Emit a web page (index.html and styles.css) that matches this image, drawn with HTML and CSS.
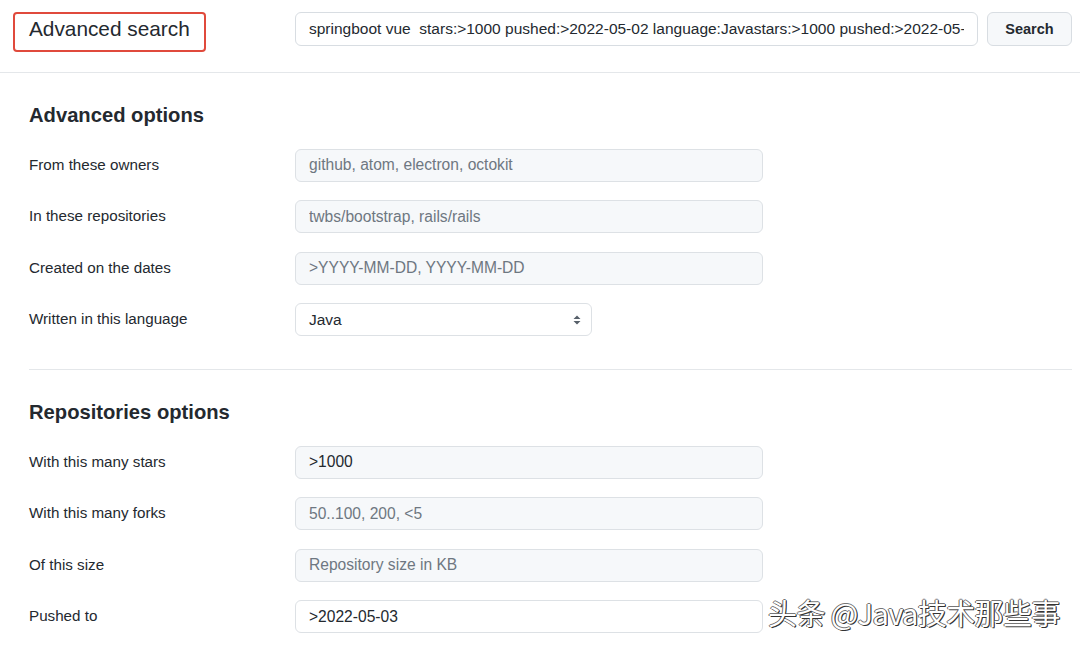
FILE: index.html
```html
<!DOCTYPE html>
<html lang="en">
<head>
<meta charset="utf-8">
<title>Advanced search</title>
<link rel="stylesheet" href="styles.css">
</head>
<body>
<div class="page">
  <header class="topbar">
    <div class="title-box"><h1 class="title">Advanced search</h1></div>
    <form class="search-form">
      <input class="search-input" type="text" value="springboot vue  stars:&gt;1000 pushed:&gt;2022-05-02 language:Javastars:&gt;1000 pushed:&gt;2022-05-03">
      <button class="search-btn" type="button">Search</button>
    </form>
  </header>

  <main class="content">
    <section class="section">
      <h2 class="section-title">Advanced options</h2>
      <div class="row">
        <label class="label">From these owners</label>
        <input class="field gray" type="text" placeholder="github, atom, electron, octokit">
      </div>
      <div class="row">
        <label class="label">In these repositories</label>
        <input class="field gray" type="text" placeholder="twbs/bootstrap, rails/rails">
      </div>
      <div class="row">
        <label class="label">Created on the dates</label>
        <input class="field gray" type="text" placeholder="&gt;YYYY-MM-DD, YYYY-MM-DD">
      </div>
      <div class="row">
        <label class="label">Written in this language</label>
        <div class="select">
          <span>Java</span>
          <svg class="updown" width="8" height="12" viewBox="0 0 8 12"><path d="M4 1.5 L7.5 5 H0.5 Z M4 10.5 L7.5 7 H0.5 Z" fill="#57606a"/></svg>
        </div>
      </div>
    </section>

    <hr class="divider">

    <section class="section">
      <h2 class="section-title">Repositories options</h2>
      <div class="row">
        <label class="label">With this many stars</label>
        <input class="field gray" type="text" value="&gt;1000">
      </div>
      <div class="row">
        <label class="label">With this many forks</label>
        <input class="field gray" type="text" placeholder="50..100, 200, &lt;5">
      </div>
      <div class="row">
        <label class="label">Of this size</label>
        <input class="field gray" type="text" placeholder="Repository size in KB">
      </div>
      <div class="row">
        <label class="label">Pushed to</label>
        <input class="field" type="text" value="&gt;2022-05-03">
      </div>
    </section>
  </main>

  <div class="watermark">头条 @Java技术那些事</div>
</div>
</body>
</html>
```

FILE: styles.css
```css
* { box-sizing: border-box; }

html, body {
  margin: 0;
  padding: 0;
  background: #ffffff;
}

body {
  font-family: "Liberation Sans", Arial, sans-serif;
  color: #24292f;
  width: 1080px;
  height: 646px;
  overflow: hidden;
}

.page {
  position: relative;
  height: 646px;
}

.topbar {
  display: flex;
  align-items: flex-start;
  height: 73px;
  padding: 12px 8px 0 13px;
  border-bottom: 1px solid #e4e7ea;
}

.title-box {
  width: 193px;
  height: 40px;
  border: 2px solid #e04a3c;
  border-radius: 4px;
  display: flex;
  align-items: center;
  padding-left: 14px;
}

.title {
  margin: 0;
  font-size: 20.8px;
  font-weight: 400;
  color: #24292f;
  line-height: 1;
  position: relative;
  top: -3px;
}

.search-form {
  display: flex;
  gap: 9px;
  margin-left: 89px;
}

.search-input {
  width: 683px;
  height: 34px;
  border: 1px solid #d8dde2;
  border-radius: 6px;
  padding: 0 13px;
  font-family: inherit;
  font-size: 15.5px;
  color: #24292f;
  background: #fff;
  outline: none;
}

.search-btn {
  width: 85px;
  height: 34px;
  border: 1px solid #d8dde2;
  border-radius: 6px;
  background: #f6f8fa;
  font-family: inherit;
  font-size: 14.5px;
  font-weight: 700;
  color: #24292f;
}

.content {
  padding: 0 8px 0 29px;
}

.section {
  display: flex;
  flex-direction: column;
  gap: 18.5px;
}

.section-title {
  margin: 27px 0 0 0;
  font-size: 20.2px;
  font-weight: 700;
  line-height: 30px;
  color: #24292f;
}

.row {
  display: grid;
  grid-template-columns: 266px 468px;
  align-items: center;
  height: 33px;
}

.label {
  font-size: 15.2px;
  color: #24292f;
  position: relative;
  top: -1px;
}

.field {
  width: 468px;
  height: 33px;
  border: 1px solid #dde1e5;
  border-radius: 6px;
  padding: 0 13px;
  font-family: inherit;
  font-size: 15.6px;
  color: #24292f;
  background: #ffffff;
  outline: none;
}

.field.gray {
  background: #f6f8fa;
}

.field::placeholder {
  color: #6e7781;
}

.select {
  width: 297px;
  height: 33px;
  border: 1px solid #dde1e5;
  border-radius: 6px;
  padding: 0 10px 0 13px;
  display: flex;
  align-items: center;
  justify-content: space-between;
  font-size: 15.5px;
  background: #fff;
}

.divider {
  margin: 33px 0 0 0;
  border: 0;
  border-top: 1px solid #e4e7ea;
}

.watermark {
  position: absolute;
  left: 768px;
  top: 593px;
  font-family: "Noto Sans CJK SC", "Liberation Sans", sans-serif;
  font-size: 29px;
  line-height: 38px;
  color: #ffffff;
  letter-spacing: -0.6px;
  text-shadow: 1px 1px 0 #333, -1px 0 0 #666, 0 -1px 0 #777, 1px 0 0 #444;
}
```
